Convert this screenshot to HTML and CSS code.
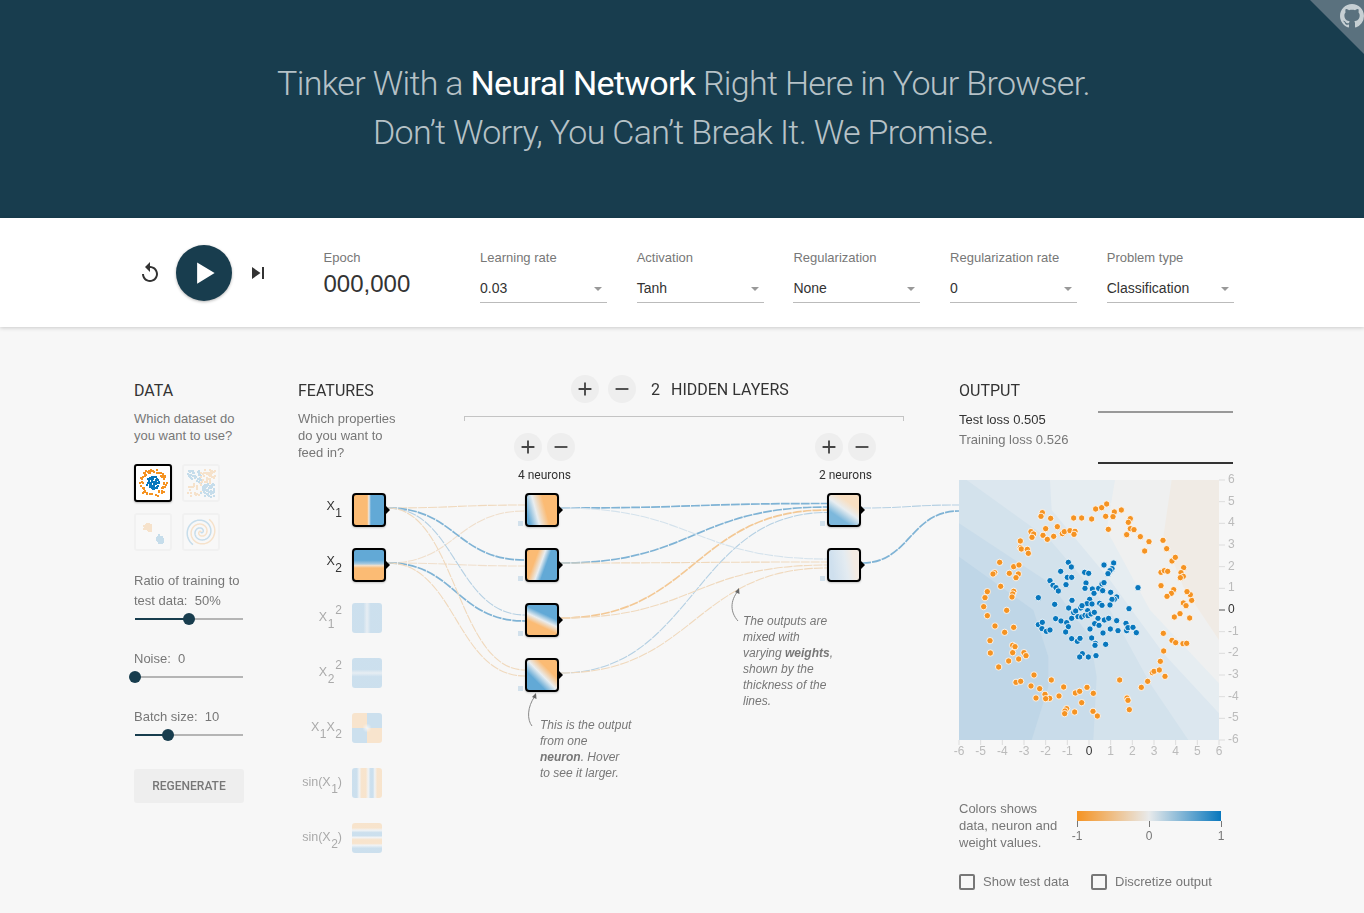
FILE: index.html
```html
<!DOCTYPE html>
<html lang="en">
<head>
<meta charset="utf-8">
<title>A Neural Network Playground</title>
<link rel="stylesheet" href="styles.css">
</head>
<body>
<header class="hero">
  <h1 class="hero-title">Tinker With a <strong>Neural Network</strong> Right Here in Your Browser.<br>Don’t Worry, You Can’t Break It. We Promise.</h1>
  <a class="github-corner" href="#" aria-label="GitHub">
    <svg class="github-icon" viewBox="0 0 16 16"><path d="M8 0C3.58 0 0 3.58 0 8c0 3.54 2.29 6.53 5.47 7.59.4.07.55-.17.55-.38 0-.19-.01-.82-.01-1.49-2.01.37-2.53-.49-2.69-.94-.09-.23-.48-.94-.82-1.13-.28-.15-.68-.52-.01-.53.63-.01 1.08.58 1.23.82.72 1.21 1.87.87 2.33.66.07-.52.28-.87.51-1.07-1.78-.2-3.64-.89-3.64-3.95 0-.87.31-1.59.82-2.15-.08-.2-.36-1.02.08-2.12 0 0 .67-.21 2.2.82.64-.18 1.32-.27 2-.27.68 0 1.36.09 2 .27 1.53-1.04 2.2-.82 2.2-.82.44 1.1.16 1.92.08 2.12.51.56.82 1.27.82 2.15 0 3.07-1.87 3.75-3.65 3.95.29.25.54.73.54 1.48 0 1.07-.01 1.93-.01 2.2 0 .21.15.46.55.38A8.013 8.013 0 0 0 16 8c0-4.42-3.58-8-8-8z"/></svg>
  </a>
</header>

<section class="controls">
  <div class="timeline">
    <button class="icon-btn" aria-label="Reset"><svg viewBox="0 0 24 24"><path d="M12 5V1L7 6l5 5V7c3.31 0 6 2.69 6 6s-2.69 6-6 6-6-2.69-6-6H4c0 4.42 3.58 8 8 8s8-3.58 8-8-3.58-8-8-8z"/></svg></button>
    <button class="play-btn" aria-label="Play"><svg viewBox="0 0 24 24"><path d="M6.500 3.500v17l14-8.500z"/></svg></button>
    <button class="icon-btn" aria-label="Step"><svg viewBox="0 0 24 24"><path d="M6 18l8.500-6L6 6v12zM16 6v12h2V6h-2z"/></svg></button>
  </div>
  <div class="epoch">
    <div class="control-label">Epoch</div>
    <div class="epoch-value">000,000</div>
  </div>
  <div class="select"><div class="control-label">Learning rate</div><div class="select-value">0.03</div></div>
  <div class="select"><div class="control-label">Activation</div><div class="select-value">Tanh</div></div>
  <div class="select"><div class="control-label">Regularization</div><div class="select-value">None</div></div>
  <div class="select"><div class="control-label">Regularization rate</div><div class="select-value">0</div></div>
  <div class="select"><div class="control-label">Problem type</div><div class="select-value">Classification</div></div>
</section>

<main class="workspace">
  <section class="data-col">
    <h4 class="col-title">DATA</h4>
    <p class="hint">Which dataset do<br>you want to use?</p>
    <div class="datasets">
      <canvas class="dataset dataset-active" id="ds-circle" width="34" height="34"></canvas>
      <canvas class="dataset" id="ds-xor" width="34" height="34"></canvas>
      <canvas class="dataset" id="ds-gauss" width="34" height="34"></canvas>
      <canvas class="dataset" id="ds-spiral" width="34" height="34"></canvas>
    </div>
    <div class="param">Ratio of training to<br>test data:&nbsp; 50%</div>
    <div class="slider"><div class="slider-fill fill-ratio"></div><div class="slider-thumb"></div></div>
    <div class="param param-next">Noise:&nbsp; 0</div>
    <div class="slider"><div class="slider-fill fill-noise"></div><div class="slider-thumb"></div></div>
    <div class="param param-next">Batch size:&nbsp; 10</div>
    <div class="slider"><div class="slider-fill fill-batch"></div><div class="slider-thumb"></div></div>
    <button class="regen">REGENERATE</button>
  </section>

  <section class="network">
    <div class="network-head">
      <div class="features-intro">
        <h4 class="col-title">FEATURES</h4>
        <p class="hint">Which properties<br>do you want to<br>feed in?</p>
      </div>
      <div class="hidden-panel">
        <div class="hidden-row">
          <button class="round-btn"><svg viewBox="0 0 24 24"><path d="M19 13h-6v6h-2v-6H5v-2h6V5h2v6h6v2z"/></svg></button>
          <button class="round-btn"><svg viewBox="0 0 24 24"><path d="M19 13H5v-2h14v2z"/></svg></button>
          <span class="layer-count">2</span>
          <span class="layer-title">HIDDEN LAYERS</span>
        </div>
        <div class="bracket"></div>
        <div class="layer-controls">
          <div class="layer-ctl">
            <div class="layer-btns">
              <button class="round-btn"><svg viewBox="0 0 24 24"><path d="M19 13h-6v6h-2v-6H5v-2h6V5h2v6h6v2z"/></svg></button>
              <button class="round-btn"><svg viewBox="0 0 24 24"><path d="M19 13H5v-2h14v2z"/></svg></button>
            </div>
            <div class="neurons">4 neurons</div>
          </div>
          <div class="layer-ctl">
            <div class="layer-btns">
              <button class="round-btn"><svg viewBox="0 0 24 24"><path d="M19 13h-6v6h-2v-6H5v-2h6V5h2v6h6v2z"/></svg></button>
              <button class="round-btn"><svg viewBox="0 0 24 24"><path d="M19 13H5v-2h14v2z"/></svg></button>
            </div>
            <div class="neurons">2 neurons</div>
          </div>
        </div>
      </div>
    </div>

    <div class="graph">
      <svg class="links" viewBox="298 493 661 380">
        <g class="link-dash">
          <path class="w1 soft-orange" d="M388 508C456 508 456 505 525 505"/>
          <path class="w1 pale-orange" d="M388 563C456 563 456 511 525 511"/>
          <path class="w2 mid-blue" d="M388 508C456 508 456 560 525 560"/>
          <path class="w1 pale-orange" d="M388 563C456 563 456 566 525 566"/>
          <path class="w1 soft-blue" d="M388 508C456 508 456 615 525 615"/>
          <path class="w2 mid-blue" d="M388 563C456 563 456 621 525 621"/>
          <path class="w1 soft-orange" d="M388 508C456 508 456 670 525 670"/>
          <path class="w1 soft-orange" d="M388 563C456 563 456 676 525 676"/>

          <path class="w2 mid-blue" d="M561 508C694 508 694 503.500 827 503.500"/>
          <path class="w2 mid-blue" d="M561 563C694 563 694 507 827 507"/>
          <path class="w2 mid-orange" d="M561 618C694 618 694 510 827 510"/>
          <path class="w1 soft-blue" d="M561 673C694 673 694 512.500 827 512.500"/>
          <path class="w1 pale-blue" d="M561 508C694 508 694 559 827 559"/>
          <path class="w1 soft-orange" d="M561 563C694 563 694 562 827 562"/>
          <path class="w1 soft-orange" d="M561 618C694 618 694 565 827 565"/>
          <path class="w1 soft-orange" d="M561 673C694 673 694 568 827 568"/>

          <path class="w1 soft-blue" d="M862 508C910 508 910 505 959 505"/>
          <path class="w2 mid-blue" d="M862 563C910 563 910 511 959 511"/>
        </g>
      </svg>

      <div class="feature-col">
        <div class="feature"><span class="feat-label feat-on">X<span class="sub">1</span></span><div class="node h-x1"></div></div>
        <div class="feature"><span class="feat-label feat-on">X<span class="sub">2</span></span><div class="node h-x2"></div></div>
        <div class="feature"><span class="feat-label">X<span class="sub">1</span><span class="sup">2</span></span><div class="thumb h-x1s"></div></div>
        <div class="feature"><span class="feat-label">X<span class="sub">2</span><span class="sup">2</span></span><div class="thumb h-x2s"></div></div>
        <div class="feature"><span class="feat-label">X<span class="sub">1</span>X<span class="sub">2</span></span><div class="thumb h-xx"></div></div>
        <div class="feature"><span class="feat-label">sin(X<span class="sub">1</span>)</span><div class="thumb h-sin1"></div></div>
        <div class="feature"><span class="feat-label">sin(X<span class="sub">2</span>)</span><div class="thumb h-sin2"></div></div>
      </div>

      <div class="layer layer-one">
        <div class="neuron"><div class="node h-n1 has-bias"></div></div>
        <div class="neuron"><div class="node h-n2 has-bias"></div></div>
        <div class="neuron"><div class="node h-n3 has-bias"></div></div>
        <div class="neuron"><div class="node h-n4 has-bias"></div></div>
      </div>

      <div class="layer layer-two">
        <div class="neuron"><div class="node h-a has-bias"></div></div>
        <div class="neuron"><div class="node h-b has-bias"></div></div>
      </div>

      <svg class="callout callout-one" viewBox="0 0 14 34"><path d="M6 33C1 27 1 14 9 3"/><path class="head" d="M10 0L10.500 6L6 4z"/></svg>
      <p class="note note-one">This is the output<br>from one<br><b>neuron</b>. Hover<br>to see it larger.</p>
      <svg class="callout callout-two" viewBox="0 0 14 34"><path d="M9 33C1 24 1 13 9 3"/><path class="head" d="M10 0L10.500 6L6 4z"/></svg>
      <p class="note note-two">The outputs are<br>mixed with<br>varying <b>weights</b>,<br>shown by the<br>thickness of the<br>lines.</p>
    </div>
  </section>

  <section class="output-col">
    <h4 class="col-title">OUTPUT</h4>
    <div class="loss-row">
      <div class="loss-text">
        <div class="loss-test">Test loss 0.505</div>
        <div class="loss-train">Training loss 0.526</div>
      </div>
      <div class="loss-chart"></div>
    </div>
    <svg class="plot" id="plot" viewBox="959 480 285 280">
      <g transform="translate(959 480) scale(.33333) translate(-27 -30)">
        <rect class="b0" x="27" y="30" width="780" height="780"/>
        <polygon class="b1" points="665,30 640,200 700,350 807,510 807,810 27,810 27,30"/>
        <polygon class="b2" points="495,30 470,180 600,420 807,640 807,810 27,810 27,30"/>
        <polygon class="b3" points="300,30 305,120 480,330 640,550 807,730 807,810 27,810 27,30"/>
        <polygon class="b4" points="50,30 300,210 480,420 600,640 715,810 27,810 27,30"/>
        <polygon class="b5" points="27,160 300,340 420,500 440,620 430,810 27,810"/>
        <polygon class="b6" points="27,260 250,420 295,560 295,650 245,810 27,810"/>
        <g id="dots"></g>
      </g>
      <g id="axes"></g>
    </svg>
    <div class="legend">
      <div class="legend-text">Colors shows<br>data, neuron and<br>weight values.</div>
      <div class="scale">
        <div class="scale-bar"></div>
        <div class="scale-ticks">
          <span class="scale-tick">-1</span><span class="scale-tick">0</span><span class="scale-tick">1</span>
        </div>
      </div>
    </div>
    <div class="checks">
      <label class="check check-first"><span class="box"></span>Show test data</label>
      <label class="check"><span class="box"></span>Discretize output</label>
    </div>
  </section>
</main>
<script src="app.js"></script>
</body>
</html>
```
FILE: styles.css
```css
* { box-sizing: border-box; }
html, body { margin: 0; padding: 0; }
body {
  background: #f7f7f7;
  color: #777;
  font-family: "Liberation Sans", Arial, sans-serif;
  font-size: 13px;
  height: 913px;
  overflow: hidden;
}
button { font-family: inherit; border: 0; padding: 0; cursor: pointer; }

.hero {
  position: relative;
  height: 218px;
  background: #183d4e;
  padding: 59px 0 0 3px;
  overflow: hidden;
}
.hero-title {
  margin: 0;
  text-align: center;
  font-family: Roboto, sans-serif;
  font-size: 34px;
  line-height: 49px;
  font-weight: 300;
  letter-spacing: -0.67px;
  color: rgba(255,255,255,.7);
}
.hero-title strong { font-weight: 400; color: #fff; }
.github-corner {
  position: absolute;
  top: 0;
  right: 0;
  width: 54px;
  height: 54px;
  background: #5a717e;
  clip-path: polygon(0 0, 100% 0, 100% 100%);
}
.github-icon { position: absolute; left: 30px; top: 4px; width: 24px; height: 24px; fill: #c6cfd3; }

.controls {
  position: relative;
  height: 109px;
  background: #fff;
  box-shadow: 0 1px 4px rgba(0,0,0,.18);
  display: flex;
  padding-left: 138px;
}
.timeline { display: flex; align-items: center; gap: 14px; height: 110px; width: 185.500px; }
.icon-btn { width: 24px; height: 24px; background: none; }
.icon-btn svg { display: block; width: 24px; height: 24px; fill: #333; }
.play-btn {
  width: 56px;
  height: 56px;
  border-radius: 50%;
  background: #183d4e;
  box-shadow: 0 1px 3px rgba(0,0,0,.3);
  display: flex;
  align-items: center;
  justify-content: center;
}
.play-btn svg { width: 30px; height: 30px; fill: #fff; }
.epoch { width: 156.500px; padding-top: 31px; }
.control-label { font-size: 13px; line-height: 17px; color: #777; }
.epoch-value {
  font-size: 24px;
  line-height: 36px;
  color: #333;
}
.select { width: 127px; margin-right: 29.700px; padding-top: 31px; }
.select-value {
  position: relative;
  font-size: 14px;
  line-height: 20px;
  color: #333;
  margin-top: 12px;
  height: 25px;
  border-bottom: 1px solid #bbb;
}
.select-value::after {
  content: "";
  position: absolute;
  right: 5px;
  top: 9px;
  border-left: 4px solid transparent;
  border-right: 4px solid transparent;
  border-top: 4px solid #999;
}

.workspace { display: flex; padding: 48px 0 0 134px; }
.col-title {
  margin: 6px 0 0;
  font-family: Roboto, sans-serif;
  font-size: 16px;
  line-height: 20px;
  font-weight: 400;
  color: #333;
}
.hint { margin: 9px 0 0; font-size: 13px; line-height: 17px; color: #777; }

.data-col { width: 164px; }
.data-col > * { max-width: 110px; }
.datasets { display: grid; grid-template-columns: 38px 38px; gap: 11px 10px; margin-top: 20px; }
.dataset {
  display: block;
  width: 38px;
  height: 38px;
  border: 2px solid #ddd;
  border-radius: 3px;
  background: #fff;
  opacity: .2;
}
.dataset-active { border: 2px solid #000; opacity: 1; box-shadow: 0 1px 2px rgba(0,0,0,.25); }
.param { margin-top: 20px; line-height: 20px; white-space: nowrap; }
.param-next { margin-top: 22px; }
.slider { position: relative; height: 16px; width: 108px; margin-left: 1px; }
.slider::before {
  content: "";
  position: absolute;
  left: 0; right: 0; top: 7px;
  height: 2px;
  background: #b5b5b5;
}
.slider-fill { position: relative; height: 2px; top: 7px; background: #183d4e; }
.slider-thumb {
  position: absolute;
  top: 2px;
  width: 12px;
  height: 12px;
  margin-left: -6px;
  border-radius: 50%;
  background: #183d4e;
}
.fill-ratio { width: 50%; }
.fill-noise { width: 0; }
.fill-batch { width: 30.500%; }
.fill-ratio + .slider-thumb { left: 50%; }
.fill-noise + .slider-thumb { left: 0; }
.fill-batch + .slider-thumb { left: 30.500%; }
.regen {
  display: block;
  width: 110px;
  height: 34px;
  margin-top: 26px;
  background: #eee;
  border-radius: 3px;
  color: #777;
  font-family: Roboto, sans-serif;
  font-size: 12px;
  font-weight: 500;
}

.network { position: relative; width: 661px; }
.network-head { display: flex; height: 118px; }
.features-intro { width: 166px; }
.hidden-panel { width: 440px; }
.hidden-row { display: flex; align-items: center; padding-left: 107px; height: 28px; }
.round-btn {
  display: flex;
  align-items: center;
  justify-content: center;
  width: 28px;
  height: 28px;
  border-radius: 50%;
  background: #eee;
}
.round-btn svg { width: 22px; height: 22px; fill: #444; }
.hidden-row .round-btn + .round-btn { margin-left: 9px; }
.layer-count {
  margin-left: 15px;
  width: 20px;
  font-family: Roboto, sans-serif;
  font-size: 16px;
  color: #333;
}
.layer-title { font-family: Roboto, sans-serif; font-size: 16px; color: #333; }
.bracket {
  height: 5px;
  margin-top: 13px;
  border: 1px solid #c4c4c4;
  border-bottom: 0;
}
.layer-controls { display: flex; gap: 240px; padding-left: 50px; margin-top: 12px; }
.layer-ctl { width: 61px; }
.layer-btns { display: flex; gap: 5px; }
.neurons {
  margin: 6px -20px 0;
  text-align: center;
  font-family: Roboto, sans-serif;
  font-size: 12px;
  line-height: 16px;
  color: #333;
}

.graph { position: relative; display: flex; height: 380px; }
.links {
  position: absolute;
  left: 0; top: 0;
  width: 661px;
  height: 380px;
  overflow: visible;
}
.link-dash path { fill: none; stroke-dasharray: 9 1; }
.w1 { stroke-width: 1.100px; }
.w2 { stroke-width: 1.700px; }
.mid-blue { stroke: #7fb3d5; }
.soft-blue { stroke: #b5d0e3; }
.pale-blue { stroke: #d4e2ec; }
.mid-orange { stroke: #f3c895; }
.soft-orange { stroke: #f0d9bd; }
.pale-orange { stroke: #f0dfcc; }

.feature-col { position: relative; width: 88px; margin-right: 139px; }
.feature { display: flex; height: 55px; }
.feat-label {
  width: 54px;
  padding-right: 10px;
  height: 30px;
  line-height: 29px;
  text-align: right;
  white-space: nowrap;
  font-size: 12.500px;
  color: #aaa;
}
.feat-on { color: #333; height: 34px; line-height: 26px; }
.sub { font-size: 12px; vertical-align: -7px; line-height: 0; margin-left: .5px; }
.sup { font-size: 12px; vertical-align: 7px; line-height: 0; margin-left: 1px; }
.thumb { width: 30px; height: 30px; border-radius: 3px; flex: none; opacity: .4; }
.node {
  position: relative;
  flex: none;
  width: 34px;
  height: 34px;
  border: 2px solid #000;
  border-radius: 4px;
  box-shadow: 0 1px 2px rgba(0,0,0,.2);
}
.node::after {
  content: "";
  position: absolute;
  left: 32px;
  top: 11px;
  border-top: 4px solid transparent;
  border-bottom: 4px solid transparent;
  border-left: 4px solid #000;
}
.has-bias::before {
  content: "";
  position: absolute;
  left: -9px;
  top: 26px;
  width: 5px;
  height: 5px;
  background: #d2e1ec;
}
.layer { position: relative; }
.layer-one { width: 34px; margin-right: 268px; }
.layer-two { width: 34px; }
.neuron { height: 55px; }

.h-x1 { background: linear-gradient(90deg, #fbbb74 44%, #f1dfca 48%, #b7d2e6 53%, #62a9d6 56%); }
.h-x2 { background: linear-gradient(180deg, #62a9d6 0, #62a9d6 34%, #a5c9e0 46%, #f3dfc8 52%, #fbbb74 60%); }
.h-x1s { background: linear-gradient(90deg, #8cbde0 38%, #cfe0ee 50%, #8cbde0 62%); }
.h-x2s { background: linear-gradient(180deg, #8cbde0 38%, #cfe0ee 50%, #8cbde0 62%); }
.h-xx { background: radial-gradient(circle, #eef0f1 0, rgba(238,240,241,0) 22%), conic-gradient(#8cbde0 0 25%, #f9c88e 25% 50%, #8cbde0 50% 75%, #f9c88e 75%); }
.h-sin1 { background: linear-gradient(90deg, #8cbde0 0 16%, #e8eef2 24%, #f9c88e 32%, #f9c88e 46%, #e8eef2 54%, #8cbde0 62%, #8cbde0 70%, #e8eef2 76%, #f9c88e 84%); }
.h-sin2 { background: linear-gradient(180deg, #f9c88e 0 16%, #e8eef2 24%, #8cbde0 32%, #8cbde0 42%, #e8eef2 48%, #f9c88e 56%, #f9c88e 68%, #e8eef2 74%, #8cbde0 84%); }
.h-n1 { background: linear-gradient(75deg, #62a9d6 8%, #e8edf0 33%, #fbbb74 60%); }
.h-n2 { background: linear-gradient(110deg, #fbbb74 28%, #e8edf0 46%, #62a9d6 60%); }
.h-n3 { background: linear-gradient(25deg, #fbbb74 34%, #e8edf0 50%, #62a9d6 66%); }
.h-n4 { background: linear-gradient(45deg, #62a9d6 30%, #e8edf0 50%, #fbbb74 70%); }
.h-a { background: linear-gradient(35deg, #7db8dc 28%, #e8edf0 52%, #f8dfc2 72%); }
.h-b { background: linear-gradient(80deg, #cfe0ee 15%, #e3ebf1 55%, #f3ebe3 80%); }

.callout { position: absolute; width: 14px; height: 34px; overflow: visible; }
.callout path { fill: none; stroke: #888; stroke-width: 1px; }
.callout .head { fill: #666; stroke: none; }
.callout-one { left: 228px; top: 200px; }
.callout-two { left: 431px; top: 95px; }
.note {
  position: absolute;
  margin: 0;
  font-size: 12px;
  line-height: 16px;
  font-style: italic;
  color: #777;
  white-space: nowrap;
}
.note b { font-weight: 700; }
.note-one { left: 242px; top: 224px; }
.note-two { left: 445px; top: 120px; }

.output-col { width: 274px; }
.loss-row { display: flex; justify-content: space-between; height: 70px; margin-top: 9px; }
.loss-text { line-height: 20px; }
.loss-test { color: #333; }
.loss-chart {
  width: 135px;
  height: 53px;
  margin-top: 1px;
  border-top: 2px solid #999;
  border-bottom: 2px solid #333;
}
.plot { display: block; width: 285px; height: 280px; overflow: visible; }
.b0 { fill: #f0ebe5; }
.b1 { fill: #eff0f0; }
.b2 { fill: #e6edf1; }
.b3 { fill: #dce7ef; }
.b4 { fill: #d3e2ec; }
.b5 { fill: #c9dcea; }
.b6 { fill: #bfd6e7; }
.dot-o { fill: #f59322; stroke: #fff; stroke-width: 2.500px; }
.dot-b { fill: #0877bd; stroke: #fff; stroke-width: 2.500px; }
.axis-text { font-size: 12px; fill: #bbb; }
.axis-text.zero { fill: #333; }
.axis-tick { stroke: #ddd; stroke-width: 1px; }
.axis-tick.zero { stroke: #555; }

.legend { display: flex; margin-top: 40px; line-height: 17px; }
.legend-text { width: 118px; }
.scale { width: 144px; padding-top: 11px; }
.scale-bar {
  height: 10px;
  background: linear-gradient(90deg, #f59322, #e8eaeb 50%, #0877bd);
}
.scale-ticks { display: flex; justify-content: space-between; font-size: 12px; line-height: 14px; }
.scale-tick { width: 0; height: 20px; padding-top: 8px; position: relative; white-space: nowrap; display: flex; justify-content: center; }
.scale-tick::before { content: ""; position: absolute; left: 0; top: 0; width: 1px; height: 6px; background: #777; }
.checks { display: flex; margin-top: 23px; }
.check { display: flex; align-items: center; height: 16px; line-height: 16px; }
.check-first { width: 132px; }
.box { width: 16px; height: 16px; border: 2px solid #777; border-radius: 2px; margin-right: 8px; }
```
FILE: app.js
```js
var ORANGE = "437,117;455,113;470,102;514,120;493,126;489,140;467,139;425,147;395,144;371,144;277,128;273,139;302,145;541,146;535,157;541,176;552,179;530,194;571,200;597,215;639,211;650,236;584,243;475,178;322,170;287,176;243,185;251,192;246,202;279,196;292,208;311,199;337,191;343,185;360,182;375,184;372,193;211,213;211,233;214,237;232,238;235,250;149,277;134,308;129,312;178,310;191,290;207,285;205,312;198,323;152,349;112,365;105,383;191,364;188,372;186,381;101,410;112,437;170,421;135,468;191,472;164,487;120,512;188,526;195,530;121,549;188,548;222,548;228,557;206,567;176,573;146,591;198,637;212,634;252,615;243,648;269,656;304,630;285,673;299,685;287,686;258,684;327,678;341,651;376,669;389,664;411,652;430,670;395,698;350,716;345,723;344,731;374,726;429,724;442,738;509,630;574,652;593,634;531,684;534,691;538,719;607,608;612,604;628,600;645,619;631,574;641,543;666,511;677,518;699,521;710,520;640,490;673,441;690,431;719,444;700,399;708,407;725,391;721,374;711,365;671,359;664,370;651,379;633,347;633,307;643,302;653,304;666,273;676,262;701,293;693,308;700,319;691,323";
var BLUE = "355,277;364,291;332,304;352,322;365,322;300,332;309,346;318,353;325,363;348,344;265,383;314,403;366,391;356,414;404,307;416,310;462,285;491,279;486,296;480,302;474,311;408,339;405,355;427,357;432,370;446,355;456,342;462,338;458,362;482,367;500,381;493,388;486,388;564,353;419,388;411,401;392,414;396,407;426,402;449,400;456,406;480,405;537,416;413,422;371,428;377,423;384,440;395,441;405,436;414,437;423,432;433,427;365,445;444,445;463,450;476,445;500,452;528,460;434,461;447,466;317,446;333,453;350,458;355,470;265,464;277,457;276,476;289,484;300,480;347,486;420,477;459,489;481,477;504,482;530,482;534,473;549,472;559,488;365,506;382,514;390,505;425,504;436,520;435,526;467,523;397,551;389,561;415,561;438,557";
var SVGNS = "http://www.w3.org/2000/svg";

function el(name, attrs, parent, text) {
  var n = document.createElementNS(SVGNS, name);
  for (var k in attrs) n.setAttribute(k, attrs[k]);
  if (text !== undefined) n.textContent = text;
  parent.appendChild(n);
  return n;
}

function addDots(list, cls) {
  var g = document.getElementById("dots");
  list.split(";").forEach(function (p) {
    var xy = p.split(",");
    el("circle", { cx: xy[0], cy: xy[1], r: 9.5, "class": cls }, g);
  });
}
addDots(ORANGE, "dot-o");
addDots(BLUE, "dot-b");

(function axes() {
  var g = document.getElementById("axes");
  for (var v = -6; v <= 6; v++) {
    var x = 959 + (v + 6) * 260 / 12;
    var y = 480 + (6 - v) * 260 / 12;
    var z = v === 0 ? " zero" : "";
    el("line", { x1: x, x2: x, y1: 740, y2: 745, "class": "axis-tick" }, g);
    el("line", { x1: 1219, x2: 1225, y1: y, y2: y, "class": "axis-tick" + z }, g);
    el("text", { x: x, y: 755, "text-anchor": "middle", "class": "axis-text" + z }, g, String(v));
    el("text", { x: 1228, y: y + 3, "class": "axis-text" + z }, g, String(v));
  }
})();

var seed = 7;
function rnd() { seed = (seed * 16807) % 2147483647; return seed / 2147483647; }
function gauss() { return (rnd() + rnd() + rnd() - 1.5) / 1.5; }
function square(c, x, y, color) { c.fillStyle = color; c.fillRect(Math.round(x), Math.round(y), 2, 2); }

(function datasets() {
  var O = "#f59322", B = "#0877bd", i, a, r;
  var c = document.getElementById("ds-circle").getContext("2d");
  for (i = 0; i < 70; i++) {
    a = rnd() * 6.283; r = 10 + rnd() * 4;
    square(c, 16 + r * Math.cos(a), 16 + r * Math.sin(a), O);
  }
  for (i = 0; i < 60; i++) {
    a = rnd() * 6.283; r = Math.sqrt(rnd()) * 6.5;
    square(c, 16 + r * Math.cos(a), 16 + r * Math.sin(a), B);
  }
  c = document.getElementById("ds-xor").getContext("2d");
  for (i = 0; i < 150; i++) {
    var x = 3 + rnd() * 27, y = 3 + rnd() * 27;
    square(c, x, y, (x < 16) === (y < 16) ? B : O);
  }
  c = document.getElementById("ds-gauss").getContext("2d");
  for (i = 0; i < 60; i++) {
    square(c, 11 + gauss() * 5, 12 + gauss() * 5, O);
    square(c, 23 + gauss() * 5, 23 + gauss() * 5, B);
  }
  c = document.getElementById("ds-spiral").getContext("2d");
  [[B, 0], [O, Math.PI]].forEach(function (s) {
    c.strokeStyle = s[0];
    c.lineWidth = 1.500;
    c.beginPath();
    for (var t = 0; t < 12; t += 0.1) {
      var rr = t * 1.250;
      c.lineTo(17 + rr * Math.sin(t + s[1]), 17 + rr * Math.cos(t + s[1]));
    }
    c.stroke();
  });
})();
```
